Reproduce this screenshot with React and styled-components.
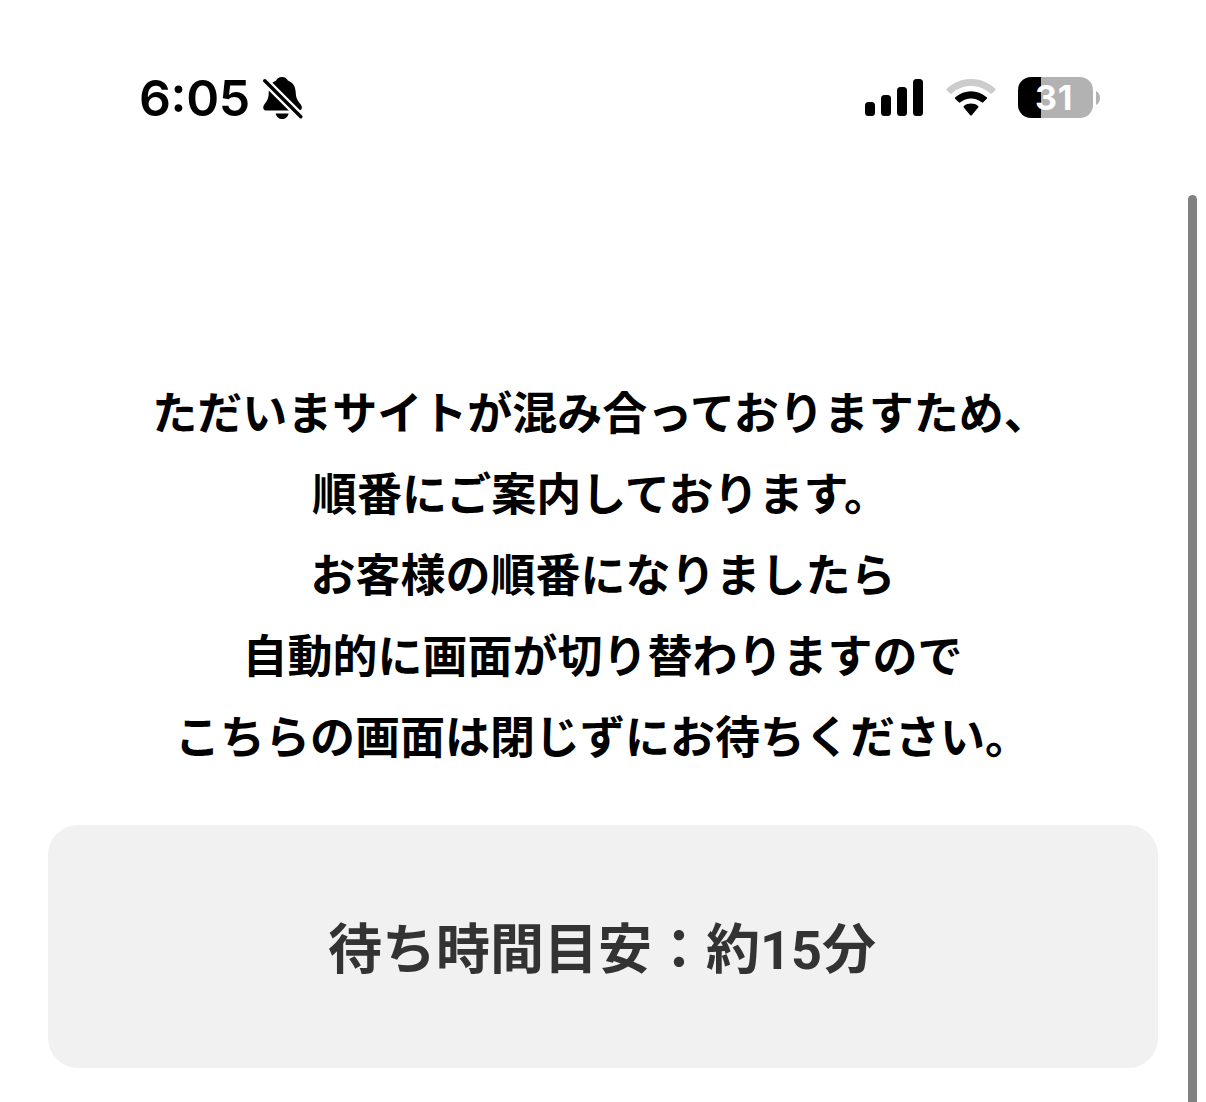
import React from 'react';
import styled, { createGlobalStyle } from 'styled-components';

const GlobalStyle = createGlobalStyle`
  * {
    box-sizing: border-box;
  }
  body {
    margin: 0;
    background: #fff;
    overflow: hidden;
  }
`;

const Screen = styled.div`
  position: relative;
  display: flex;
  flex-direction: column;
  width: 1206px;
  height: 1102px;
  overflow: hidden;
  background: #fff;
  font-family: Roboto, 'Noto Sans CJK JP', sans-serif;
`;

const StatusBar = styled.header`
  display: flex;
  align-items: center;
  justify-content: space-between;
  height: 195px;
  padding: 0 106px 0 139px;
`;

const StatusGroup = styled.div`
  display: flex;
  align-items: center;
  gap: ${({ $gap }) => $gap}px;
`;

const Time = styled.span`
  width: 112px;
  font: 600 50px/60px Inter, sans-serif;
  letter-spacing: -0.4px;
  white-space: nowrap;
`;

const Colon = styled.span`
  position: relative;
  top: -4px;
`;

const Battery = styled.div`
  display: flex;
  align-items: center;
  gap: 3px;
`;

const BatteryBody = styled.div`
  display: flex;
  align-items: center;
  justify-content: center;
  width: 75px;
  height: 41px;
  padding-right: 3px;
  border-radius: 13px;
  background: linear-gradient(to right, #000 ${({ $level }) => $level}%, #b2b2b2 ${({ $level }) => $level}%);
  color: #fff;
  font: 700 34px/41px Inter, sans-serif;
  letter-spacing: 0.6px;
`;

const Message = styled.p`
  margin: 179px 0 0;
  color: #000;
  font-size: 45px;
  font-weight: 700;
  line-height: 81px;
  text-align: center;
  white-space: nowrap;
`;

const Line = styled.span`
  display: block;
  padding-right: ${({ $trail }) => $trail}px;
`;

const WaitCard = styled.section`
  display: flex;
  align-items: center;
  justify-content: center;
  height: 243px;
  margin: 46px 48px 0;
  padding: 8px 2px 0 0;
  border-radius: 30px;
  background: #f1f1f1;
`;

const WaitTime = styled.p`
  margin: 0;
  color: #333;
  font-size: 54px;
  font-weight: 700;
  line-height: 81px;
  white-space: nowrap;
`;

const ScrollThumb = styled.div`
  position: absolute;
  top: 195px;
  right: 9px;
  bottom: -20px;
  width: 9px;
  border-radius: 5px;
  background: #808080;
`;

const lines = [
  { text: 'ただいまサイトが混み合っておりますため、', trail: 5 },
  { text: '順番にご案内しております。', trail: 5 },
  { text: 'お客様の順番になりましたら', trail: 0 },
  { text: '自動的に画面が切り替わりますので', trail: 1 },
  { text: 'こちらの画面は閉じずにお待ちください。', trail: 1 },
];

const SilentIcon = () => (
  <svg width="40" height="44" viewBox="0 0 40 44">
    <path d="M19 1C15.8 1 13.8 2.6 13.2 4.6C7.8 6.8 6 11 5.7 17.5C5.5 22.5 4 25 1.6 28C-.7 31 0 34.5 3 34.5H36C39 34.5 39.8 31 37.4 28C35 25 33 22.5 32.8 17.5C32.5 11 30.5 6.8 24.8 4.6C24.2 2.6 22.2 1 19 1Z" />
    <path d="M12.7 37.5H25.6C25 41 22.3 43 19.2 43S13.3 41 12.7 37.5Z" />
    <path d="M-2 1L42 45" stroke="#fff" strokeWidth="8" />
    <path d="M1.8 4.8L37.8 40.8" stroke="#000" strokeWidth="3.4" strokeLinecap="round" />
  </svg>
);

const SignalIcon = () => (
  <svg width="59" height="37" viewBox="0 0 59 37">
    <rect x="0" y="23" width="10" height="14" rx="3.5" />
    <rect x="16" y="16" width="10" height="21" rx="3.5" />
    <rect x="32" y="8" width="10" height="29" rx="3.5" />
    <rect x="48" y="0" width="10" height="37" rx="3.5" />
  </svg>
);

const WifiIcon = () => (
  <svg width="50" height="37" viewBox="0 0 50 37">
    <path d="M.7 9.8C14.5-3.3 35.5-3.3 49.3 9.8Q50 10.5 49.3 11.3L45.9 14.6Q45.2 15.3 44.4 14.6C33.5 4.5 16.5 4.5 5.6 14.6Q4.8 15.3 4.1 14.6L.7 11.3Q0 10.5 .7 9.8Z" fill="#ccc" />
    <path d="M9.3 18.3C18.3 10.3 31.7 10.3 40.7 18.3Q41.5 19 40.8 19.8L37.2 23.3Q36.5 24 35.7 23.3C29.5 18.2 20.5 18.2 14.3 23.3Q13.5 24 12.8 23.3L9.2 19.8Q8.5 19 9.3 18.3Z" />
    <path d="M17.9 27C22 23.8 28 23.8 32.1 27Q33 27.8 32.2 28.6L25.8 36.2Q25 37 24.2 36.2L17.8 28.6Q17 27.8 17.9 27Z" />
  </svg>
);

const BatteryTip = () => (
  <svg width="4" height="14" viewBox="0 0 4 14">
    <path d="M0 0C2.5 1.2 4 3.8 4 7S2.5 12.8 0 14Z" fill="#b2b2b2" />
  </svg>
);

const App = () => (
  <Screen>
    <GlobalStyle />
    <StatusBar>
      <StatusGroup $gap={12}>
        <Time>
          6<Colon>:</Colon>05
        </Time>
        <SilentIcon />
      </StatusGroup>
      <StatusGroup $gap={22}>
        <SignalIcon />
        <WifiIcon />
        <Battery>
          <BatteryBody $level={31}>31</BatteryBody>
          <BatteryTip />
        </Battery>
      </StatusGroup>
    </StatusBar>
    <Message lang="ja">
      {lines.map(({ text, trail }) => (
        <Line key={text} $trail={trail}>
          {text}
        </Line>
      ))}
    </Message>
    <WaitCard>
      <WaitTime lang="ja">待ち時間目安：約15分</WaitTime>
    </WaitCard>
    <ScrollThumb />
  </Screen>
);

export default App;
